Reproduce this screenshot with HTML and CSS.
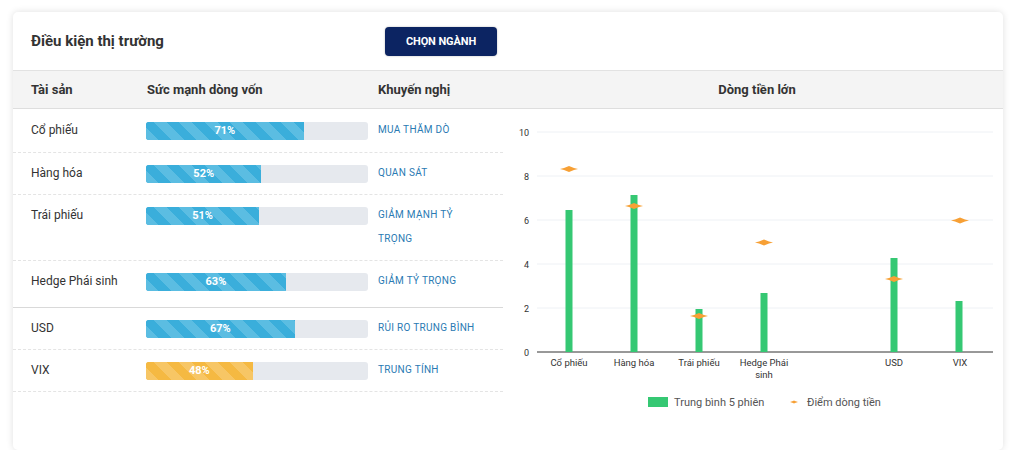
FILE: index.html
```html
<!DOCTYPE html>
<html lang="vi">
<head>
<meta charset="utf-8">
<title>Điều kiện thị trường</title>
<link rel="stylesheet" href="styles.css">
</head>
<body>
<div class="card">
  <div class="card-header">
    <h2 class="title">Điều kiện thị trường</h2>
    <button class="btn">CHỌN NGÀNH</button>
  </div>
  <div class="card-body">
    <div class="table">
      <div class="thead">
        <div class="c-name">Tài sản</div>
        <div class="c-bar">Sức mạnh dòng vốn</div>
        <div class="c-rec">Khuyến nghị</div>
      </div>
      <div class="row row-first">
        <div class="c-name">Cổ phiếu</div>
        <div class="c-bar"><div class="bar"><div class="fill" style="width:71%">71%</div></div></div>
        <div class="c-rec rec">MUA THĂM DÒ</div>
      </div>
      <div class="row">
        <div class="c-name">Hàng hóa</div>
        <div class="c-bar"><div class="bar"><div class="fill" style="width:52%">52%</div></div></div>
        <div class="c-rec rec">QUAN SÁT</div>
      </div>
      <div class="row">
        <div class="c-name">Trái phiếu</div>
        <div class="c-bar"><div class="bar"><div class="fill" style="width:51%">51%</div></div></div>
        <div class="c-rec rec">GIẢM MẠNH TỶ TRỌNG</div>
      </div>
      <div class="row row-group-end">
        <div class="c-name">Hedge Phái sinh</div>
        <div class="c-bar"><div class="bar"><div class="fill" style="width:63%">63%</div></div></div>
        <div class="c-rec rec">GIẢM TỶ TRỌNG</div>
      </div>
      <div class="row">
        <div class="c-name">USD</div>
        <div class="c-bar"><div class="bar"><div class="fill" style="width:67%">67%</div></div></div>
        <div class="c-rec rec">RỦI RO TRUNG BÌNH</div>
      </div>
      <div class="row">
        <div class="c-name">VIX</div>
        <div class="c-bar"><div class="bar"><div class="fill fill-warn" style="width:48%">48%</div></div></div>
        <div class="c-rec rec">TRUNG TÍNH</div>
      </div>
    </div>
    <div class="chart">
      <div class="chart-head">Dòng tiền lớn</div>
      <svg class="chart-svg" width="500" height="320" viewBox="0 0 500 320">
        <g class="grid">
          <line x1="34" y1="23" x2="490" y2="23"/>
          <line x1="34" y1="67" x2="490" y2="67"/>
          <line x1="34" y1="111" x2="490" y2="111"/>
          <line x1="34" y1="155" x2="490" y2="155"/>
          <line x1="34" y1="199" x2="490" y2="199"/>
        </g>
        <line class="axis" x1="34" y1="243" x2="490" y2="243"/>
        <g class="ylabels">
          <text x="26" y="26.5">10</text>
          <text x="26" y="70.5">8</text>
          <text x="26" y="114.5">6</text>
          <text x="26" y="158.5">4</text>
          <text x="26" y="202.5">2</text>
          <text x="26" y="246.5">0</text>
        </g>
        <g class="bars">
          <rect x="62.5" y="101" width="7" height="142"/>
          <rect x="127.5" y="86" width="7" height="157"/>
          <rect x="192.5" y="200" width="7" height="43"/>
          <rect x="257.5" y="184" width="7" height="59"/>
          <rect x="387.5" y="149" width="7" height="94"/>
          <rect x="452.5" y="192" width="7" height="51"/>
        </g>
        <g class="markers">
          <path d="M57 60 L61 59 L66 57 L71 59 L75 60 L71 61 L66 63 L61 61 Z"/>
          <path d="M122 97 L126 96 L131 94 L136 96 L140 97 L136 98 L131 100 L126 98 Z"/>
          <path d="M187 207 L191 206 L196 204 L201 206 L205 207 L201 208 L196 210 L191 208 Z"/>
          <path d="M252 133.5 L256 132.5 L261 130.5 L266 132.5 L270 133.5 L266 134.5 L261 136.5 L256 134.5 Z"/>
          <path d="M382 170 L386 169 L391 167 L396 169 L400 170 L396 171 L391 173 L386 171 Z"/>
          <path d="M448 111.5 L452 110.5 L457 108.5 L462 110.5 L466 111.5 L462 112.5 L457 114.5 L452 112.5 Z"/>
        </g>
        <g class="xlabels">
          <text x="66" y="256.5">Cổ phiếu</text>
          <text x="131" y="256.5">Hàng hóa</text>
          <text x="196" y="256.5">Trái phiếu</text>
          <text x="261" y="256.5">Hedge Phái</text>
          <text x="261" y="268.5">sinh</text>
          <text x="391" y="256.5">USD</text>
          <text x="457" y="256.5">VIX</text>
        </g>
        <g class="legend">
          <rect class="legend-bar" x="145" y="288" width="20" height="10"/>
          <text x="171" y="297">Trung bình 5 phiên</text>
          <path class="legend-mark" d="M287 293 L290 292 L291 291.5 L292 292 L295 293 L292 294 L291 294.5 L290 294 Z"/>
          <text x="304" y="297">Điểm dòng tiền</text>
        </g>
      </svg>
    </div>
  </div>
</div>
</body>
</html>
```
FILE: styles.css
```css
* { box-sizing: border-box; }
html, body { margin: 0; padding: 0; background: #ffffff; }
body {
  font-family: Roboto, "Noto Sans", "Liberation Sans", sans-serif;
  color: #333;
  padding: 12px 17px 0 13px;
}
.card {
  width: 990px;
  height: 438px;
  background: #fff;
  border-radius: 5px;
  box-shadow: 0 0 7px rgba(0, 0, 0, 0.13);
  overflow: hidden;
}
.card-header {
  display: flex;
  align-items: center;
  height: 59px;
  padding: 0 0 0 18px;
  border-bottom: 1px solid #e2e2e2;
}
.title {
  margin: 0;
  width: 354px;
  font-size: 15px;
  font-weight: 700;
  color: #333;
  padding-bottom: 1px;
}
.btn {
  width: 112px;
  height: 29px;
  margin-top: 1px;
  border: 0;
  border-radius: 4px;
  background: #0c2462;
  color: #fff;
  font-family: inherit;
  font-size: 11px;
  font-weight: 700;
  letter-spacing: -0.1px;
  box-shadow: 0 0 2px rgba(0, 0, 0, 0.3);
}
.card-body {
  display: grid;
  grid-template-columns: 490px 500px;
}
.thead, .chart-head {
  height: 38px;
  background: #f4f4f4;
  border-bottom: 1px solid #dedede;
  font-size: 13px;
  font-weight: 700;
  color: #333;
}
.thead {
  display: grid;
  grid-template-columns: 116px 231px 1fr;
  align-items: center;
  padding-left: 18px;
}
.chart-head {
  display: flex;
  align-items: center;
  justify-content: center;
  padding-left: 8px;
}
.row {
  display: grid;
  grid-template-columns: 115px 232px 1fr;
  align-items: start;
  padding: 8px 0 9px 18px;
  border-bottom: 1px dashed #e4e4e4;
  font-size: 12px;
  line-height: 24px;
}
.row-first { padding-top: 9px; padding-bottom: 10px; }
.row-group-end { padding-bottom: 14px; border-bottom: 1px solid #d9d9d9; }
.c-name { color: #333; }
.bar {
  width: 222px;
  height: 18px;
  margin-top: 4px;
  background: #e6e9ee;
  border-radius: 3px;
  overflow: hidden;
}
.fill {
  height: 100%;
  background-color: #3aaedb;
  background-image: repeating-linear-gradient(45deg,
    #5bbde2 0, #5bbde2 9px, #3aaedb 9px, #3aaedb 18px);
  color: #fff;
  font-size: 11px;
  font-weight: 700;
  line-height: 18px;
  text-align: center;
}
.fill-warn {
  background-color: #f5b942;
  background-image: repeating-linear-gradient(45deg,
    #f7c665 0, #f7c665 9px, #f5b942 9px, #f5b942 18px);
}
.rec {
  font-size: 10px;
  font-weight: 400;
  color: #2a7ab3;
  letter-spacing: 0.3px;
  padding-right: 20px;
}
.chart-svg { display: block; font-family: Roboto, "Noto Sans", "Liberation Sans", sans-serif; }
.grid line { stroke: #eef1f5; stroke-width: 1; }
.axis { stroke: #333; stroke-width: 1; }
.ylabels text { font-size: 9px; fill: #333; text-anchor: end; }
.xlabels text { font-size: 9.5px; fill: #333; text-anchor: middle; }
.bars rect { fill: #35c873; }
.markers path { fill: #f7a035; }
.legend text { font-size: 11px; fill: #555; }
.legend-bar { fill: #35c873; }
.legend-mark { fill: #f7a035; }
```
